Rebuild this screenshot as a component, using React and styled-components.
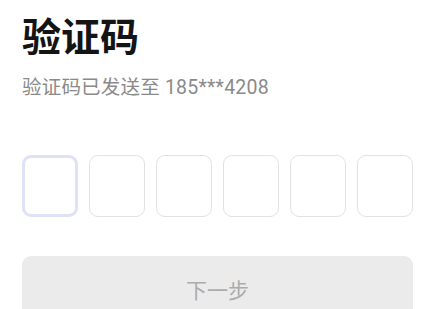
import React, { useState } from 'react'
import styled, { createGlobalStyle } from 'styled-components'

const GlobalStyle = createGlobalStyle`
  html, body {
    margin: 0;
    padding: 0;
    background: #fff;
  }
  body {
    font-family: Roboto, "Noto Sans CJK SC", sans-serif;
  }
`

const Page = styled.div`
  display: flex;
  flex-direction: column;
  padding: 19px 0 0 22px;
  width: 391px;
`

const Title = styled.h1`
  margin: 0;
  font-size: 39px;
  line-height: 39px;
  font-weight: 700;
  color: #141414;
`

const Hint = styled.p`
  margin: 20px 0 0;
  font-size: 19.5px;
  line-height: 20px;
  color: #8a8a8a;
  letter-spacing: 0.2px;
`

const CodeRow = styled.div`
  display: flex;
  justify-content: space-between;
  margin-top: 57px;
`

const CodeBox = styled.input`
  box-sizing: border-box;
  width: 56px;
  height: 62px;
  padding: 0;
  border-radius: 9px;
  border: ${p => (p.$active ? '3px solid #dfe1f6' : '1.5px solid #e2e2e2')};
  background: #fff;
  outline: none;
  text-align: center;
  font-family: inherit;
  font-size: 24px;
  color: #222;
`

const NextButton = styled.button`
  margin-top: 39px;
  height: 66px;
  border: none;
  border-radius: 9px;
  background: #ebebeb;
  color: #ababab;
  font-family: inherit;
  font-size: 21px;
  cursor: not-allowed;
`

export default function App() {
  const [code] = useState(['', '', '', '', '', ''])

  return (
    <Page>
      <GlobalStyle />
      <Title>验证码</Title>
      <Hint>验证码已发送至 185***4208</Hint>
      <CodeRow>
        {code.map((v, i) => (
          <CodeBox key={i} $active={i === 0} value={v} readOnly maxLength={1} />
        ))}
      </CodeRow>
      <NextButton disabled>下一步</NextButton>
    </Page>
  )
}
